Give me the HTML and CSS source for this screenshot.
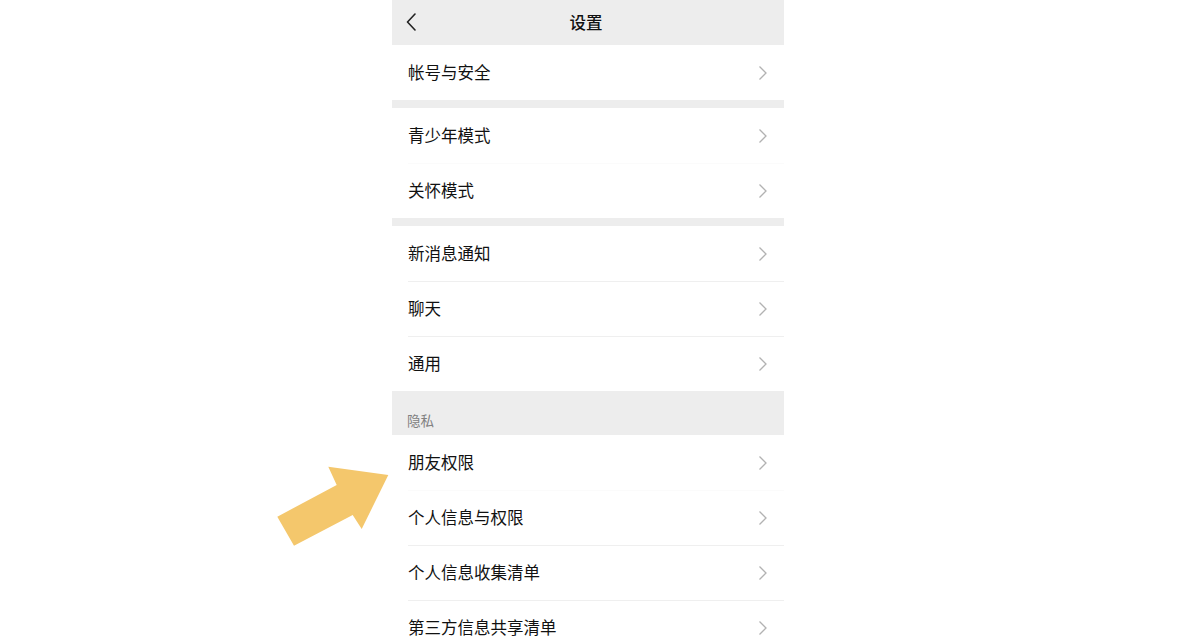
FILE: index.html
```html
<!DOCTYPE html>
<html lang="zh-CN">
<head>
<meta charset="utf-8">
<title>设置</title>
<link rel="stylesheet" href="styles.css">
</head>
<body>
<div class="page">
  <div class="phone">
    <header class="navbar">
      <svg class="back" width="16" height="22" viewBox="0 0 16 22"><polyline points="10,1 2.5,9 10,17" fill="none" stroke="#222" stroke-width="1.6" stroke-linecap="round" stroke-linejoin="round"/></svg>
      <div class="title">设置</div>
    </header>

    <section class="group">
      <div class="row"><span class="label">帐号与安全</span><svg class="chev" width="10" height="16" viewBox="0 0 10 16"><polyline points="2.5,1.5 9,8 2.5,14.5" fill="none" stroke="#b2b2b2" stroke-width="1.3"/></svg></div>
    </section>
    <div class="gap"></div>

    <section class="group">
      <div class="row"><span class="label">青少年模式</span><svg class="chev" width="10" height="16" viewBox="0 0 10 16"><polyline points="2.5,1.5 9,8 2.5,14.5" fill="none" stroke="#b2b2b2" stroke-width="1.3"/></svg></div>
      <div class="row faint"><span class="label">关怀模式</span><svg class="chev" width="10" height="16" viewBox="0 0 10 16"><polyline points="2.5,1.5 9,8 2.5,14.5" fill="none" stroke="#b2b2b2" stroke-width="1.3"/></svg></div>
    </section>
    <div class="gap"></div>

    <section class="group">
      <div class="row"><span class="label">新消息通知</span><svg class="chev" width="10" height="16" viewBox="0 0 10 16"><polyline points="2.5,1.5 9,8 2.5,14.5" fill="none" stroke="#b2b2b2" stroke-width="1.3"/></svg></div>
      <div class="row lined"><span class="label">聊天</span><svg class="chev" width="10" height="16" viewBox="0 0 10 16"><polyline points="2.5,1.5 9,8 2.5,14.5" fill="none" stroke="#b2b2b2" stroke-width="1.3"/></svg></div>
      <div class="row lined"><span class="label">通用</span><svg class="chev" width="10" height="16" viewBox="0 0 10 16"><polyline points="2.5,1.5 9,8 2.5,14.5" fill="none" stroke="#b2b2b2" stroke-width="1.3"/></svg></div>
    </section>

    <div class="section-title">隐私</div>

    <section class="group">
      <div class="row"><span class="label">朋友权限</span><svg class="chev" width="10" height="16" viewBox="0 0 10 16"><polyline points="2.5,1.5 9,8 2.5,14.5" fill="none" stroke="#b2b2b2" stroke-width="1.3"/></svg></div>
      <div class="row faint"><span class="label">个人信息与权限</span><svg class="chev" width="10" height="16" viewBox="0 0 10 16"><polyline points="2.5,1.5 9,8 2.5,14.5" fill="none" stroke="#b2b2b2" stroke-width="1.3"/></svg></div>
      <div class="row lined"><span class="label">个人信息收集清单</span><svg class="chev" width="10" height="16" viewBox="0 0 10 16"><polyline points="2.5,1.5 9,8 2.5,14.5" fill="none" stroke="#b2b2b2" stroke-width="1.3"/></svg></div>
      <div class="row lined"><span class="label">第三方信息共享清单</span><svg class="chev" width="10" height="16" viewBox="0 0 10 16"><polyline points="2.5,1.5 9,8 2.5,14.5" fill="none" stroke="#b2b2b2" stroke-width="1.3"/></svg></div>
    </section>
  </div>

  <svg class="arrow" width="120" height="90" viewBox="270 460 120 90">
    <polygon points="388.3,475 328.3,466.7 336.7,485 277.3,516.7 294,545.7 352.7,515 361.7,529" fill="#f4c76c"/>
  </svg>
</div>
</body>
</html>
```

FILE: styles.css
```css
html, body {
  margin: 0;
  padding: 0;
  background: #ffffff;
}

body {
  font-family: "Noto Sans CJK SC", "Noto Sans", sans-serif;
  color: #111111;
  width: 1201px;
  height: 640px;
  overflow: hidden;
}

.page {
  position: relative;
  padding-left: 392px;
  height: 640px;
}

.phone {
  width: 392px;
  background: #ededed;
  height: 640px;
  overflow: hidden;
}

.navbar {
  position: relative;
  height: 45px;
  background: #ededed;
  display: flex;
  align-items: center;
  justify-content: center;
}

.back {
  position: absolute;
  left: 13px;
  top: 13px;
}

.title {
  font-size: 16.5px;
  font-weight: 500;
  color: #111;
  margin-left: -4px;
  line-height: 1;
}

.group {
  background: #ffffff;
}

.row {
  height: 55px;
  display: flex;
  align-items: center;
  justify-content: space-between;
  margin-left: 16px;
  padding-right: 17px;
  box-sizing: border-box;
}

.row.lined {
  box-shadow: inset 0 1px 0 #efefef;
}

.row.faint {
  box-shadow: inset 0 1px 0 #fbfbfb;
}

.label {
  font-size: 16.5px;
  line-height: 1;
  color: #111111;
  margin-top: -1px;
}

.chev {
  display: block;
}

.gap {
  height: 8px;
  background: #ededed;
}

.section-title {
  height: 44px;
  box-sizing: border-box;
  padding: 20px 0 0 15px;
  font-size: 13.5px;
  line-height: 18px;
  color: #808080;
  background: #ededed;
}

.arrow {
  position: absolute;
  left: 270px;
  top: 460px;
}
```
